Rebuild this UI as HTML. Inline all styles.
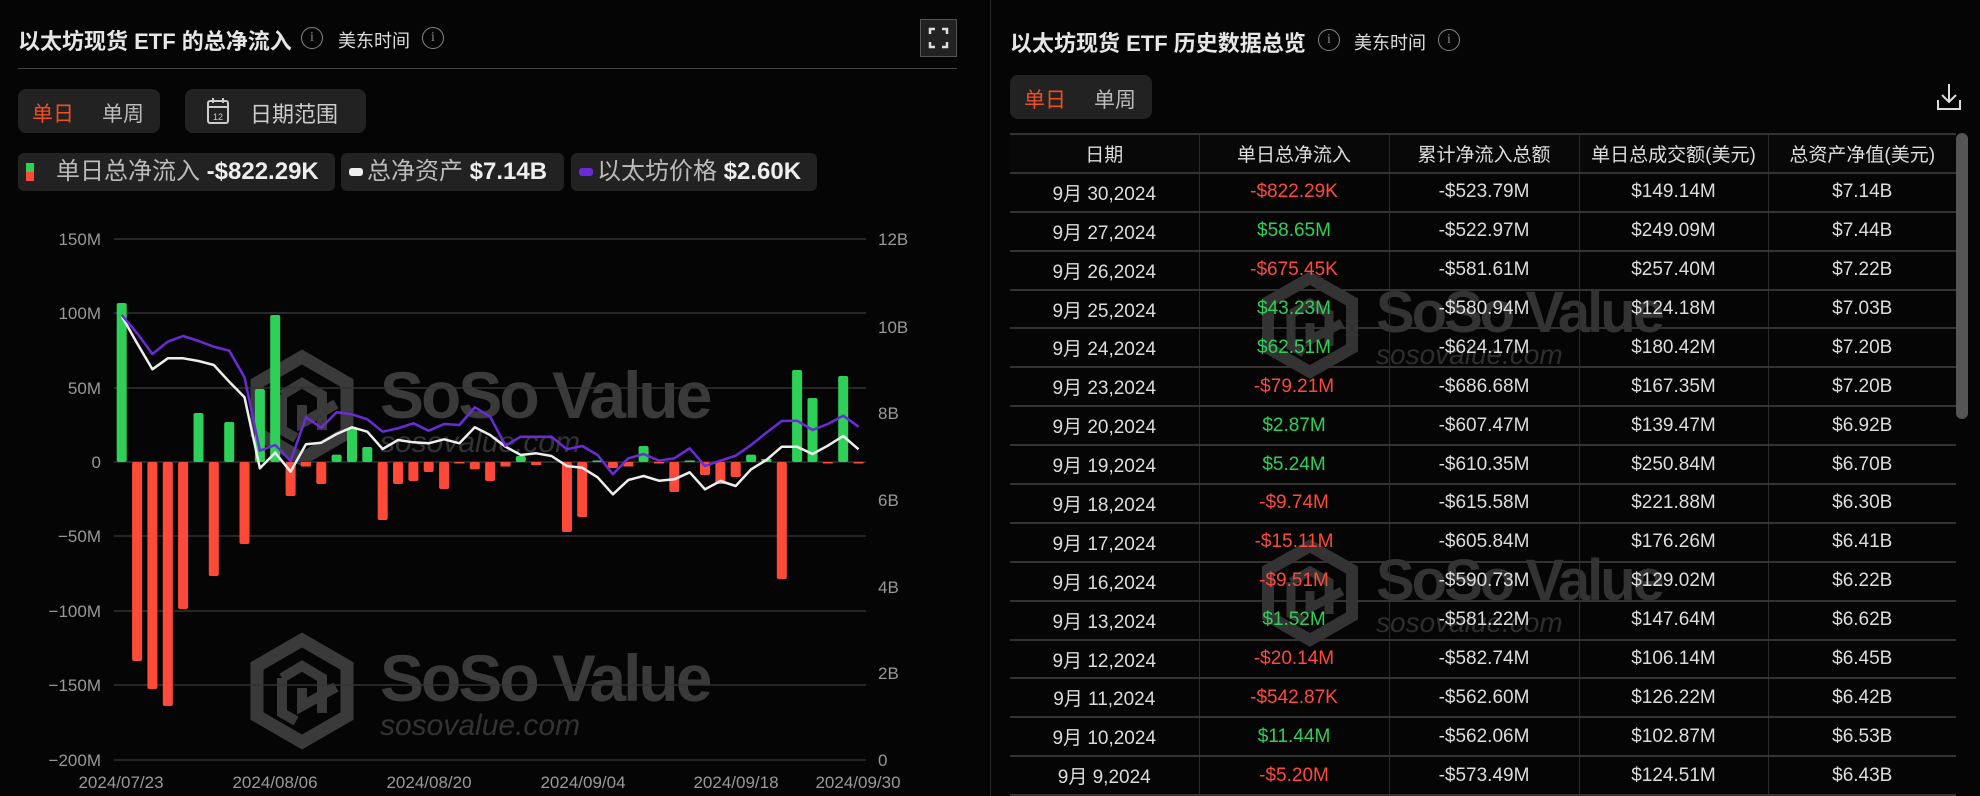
<!DOCTYPE html>
<html><head><meta charset="utf-8"><style>
*{margin:0;padding:0;box-sizing:border-box}
body{width:1980px;height:796px;background:#050505;overflow:hidden;position:relative;font-family:"Liberation Sans","Noto Sans CJK SC",sans-serif;color:#ddd}
.a{position:absolute;white-space:nowrap}
.t{font-size:22px;font-weight:bold;color:#e6e6e6}
.s{font-size:18px;color:#ddd}
.info{width:22px;height:22px;border:1.5px solid #888;border-radius:50%;font-size:14px;color:#888;text-align:center;line-height:19px;font-family:"Liberation Serif",serif}
.box{background:#222;border-radius:8px}
.chip{background:#222;border-radius:6px;height:38px;font-size:24px;line-height:38px;color:#bbb}
.chip b{color:#eee;font-weight:bold}
table{border-collapse:collapse;position:absolute;left:1010px;top:133px;width:946px;font-size:19px;color:#ddd;table-layout:fixed}
td,th{height:38.9px;text-align:center;border-bottom:2px solid #333;border-left:1px solid #2a2a2a;font-weight:normal;padding:0}
th{border-top:2px solid #333;background:#080808}
td:first-child,th:first-child{border-left:none}
.r{color:#ff4a3a}.g{color:#2ed158}
</style></head><body>
<!-- left header -->
<div class="a t" style="left:18px;top:24px">以太坊现货 ETF 的总净流入</div>
<div class="a info" style="left:301px;top:27px">i</div>
<div class="a s" style="left:338px;top:27px">美东时间</div>
<div class="a info" style="left:422px;top:27px">i</div>
<div class="a" style="left:920px;top:19px;width:37px;height:38px;background:#222;border:1px solid #555"></div>
<svg class="a" style="left:920px;top:19px" width="37" height="38"><path d="M10 15V10H15M22 10H27V15M27 23V28H22M15 28H10V23" stroke="#ddd" stroke-width="2.5" fill="none"/></svg>
<div class="a" style="left:18px;top:68px;width:939px;height:1px;background:#444"></div>
<div class="a box" style="left:18px;top:89px;width:142px;height:44px"></div>
<div class="a" style="left:32px;top:98px;font-size:21px;color:#f04e23">单日</div>
<div class="a" style="left:102px;top:98px;font-size:21px;color:#bbb">单周</div>
<div class="a box" style="left:185px;top:89px;width:181px;height:44px"></div>
<svg class="a" style="left:206px;top:96px" width="24" height="30"><rect x="2" y="5" width="20" height="22" rx="2" stroke="#ccc" stroke-width="2" fill="none"/><path d="M2 11H22M7 2V7M17 2V7" stroke="#ccc" stroke-width="2"/><text x="12" y="24" font-size="9" fill="#ccc" text-anchor="middle" font-family="Liberation Sans">12</text></svg>
<div class="a" style="left:250px;top:97px;font-size:22px;color:#ccc">日期范围</div>
<div class="a chip" style="left:18px;top:153px;width:317px">
 <span style="position:absolute;left:8px;top:10px;width:8px;height:9px;background:#2ed158"></span><span style="position:absolute;left:8px;top:19px;width:8px;height:9px;background:#ff4a3a"></span>
 <span style="position:absolute;left:38px">单日总净流入 <b>-$822.29K</b></span></div>
<div class="a chip" style="left:341px;top:153px;width:223px">
 <span style="position:absolute;left:8px;top:15px;width:14px;height:8px;border-radius:3px;background:#eee"></span>
 <span style="position:absolute;left:26px">总净资产 <b>$7.14B</b></span></div>
<div class="a chip" style="left:571px;top:153px;width:246px">
 <span style="position:absolute;left:8px;top:15px;width:14px;height:8px;border-radius:3px;background:#6b2bd9"></span>
 <span style="position:absolute;left:26px">以太坊价格 <b>$2.60K</b></span></div>

<svg class="a" style="left:0;top:0" width="990" height="796" font-family="Liberation Sans">
<g fill="#3a3a3a">
 <g id="wm1">
 <path d="M302 357L347 383V433L302 459L257 433V383Z" fill="none" stroke="#3a3a3a" stroke-width="13"/>
 <path d="M282 395L302 383L322 395V412L302 423V405M282 395V430L296 438M322 430V412L336 404" fill="none" stroke="#3a3a3a" stroke-width="10"/>
 <text x="380" y="418" font-size="66" font-weight="bold" letter-spacing="-3">SoSo Value</text>
 <text x="380" y="452" font-size="30" font-style="italic" fill="#333">sosovalue.com</text>
 </g>
 <use href="#wm1" transform="translate(0,283)"/>
</g>
<g stroke="#333" stroke-width="1.5">
 <line x1="114" x2="866" y1="239" y2="239"/><line x1="114" x2="866" y1="313" y2="313"/><line x1="114" x2="866" y1="388" y2="388"/><line x1="114" x2="866" y1="462" y2="462"/><line x1="114" x2="866" y1="536" y2="536"/><line x1="114" x2="866" y1="611" y2="611"/><line x1="114" x2="866" y1="685" y2="685"/><line x1="114" x2="866" y1="760" y2="760"/>
</g>
<g fill="#999" font-size="17" text-anchor="end">
 <text x="101" y="245">150M</text><text x="101" y="319">100M</text><text x="101" y="394">50M</text><text x="101" y="468">0</text><text x="101" y="542">−50M</text><text x="101" y="617">−100M</text><text x="101" y="691">−150M</text><text x="101" y="766">−200M</text>
</g>
<g fill="#999" font-size="17">
 <text x="878" y="245">12B</text><text x="878" y="333">10B</text><text x="878" y="419">8B</text><text x="878" y="506">6B</text><text x="878" y="593">4B</text><text x="878" y="679">2B</text><text x="878" y="766">0</text>
</g>
<g fill="#999" font-size="17" text-anchor="middle">
 <text x="121" y="788">2024/07/23</text><text x="275" y="788">2024/08/06</text><text x="429" y="788">2024/08/20</text><text x="583" y="788">2024/09/04</text><text x="736" y="788">2024/09/18</text><text x="858" y="788">2024/09/30</text>
</g>
<g fill="#2ed158">
 <rect x="116.7" y="303" width="10" height="159" rx="2"/>
 <rect x="193.5" y="413" width="10" height="49" rx="2"/>
 <rect x="224.2" y="422" width="10" height="40" rx="2"/>
 <rect x="254.9" y="389" width="10" height="73" rx="2"/>
 <rect x="270.2" y="315" width="10" height="147" rx="2"/>
 <rect x="331.6" y="454.6" width="10" height="7.4" rx="2"/>
 <rect x="347" y="428" width="10" height="34" rx="2"/>
 <rect x="362.3" y="447" width="10" height="15" rx="2"/>
 <rect x="515.8" y="456" width="10" height="6" rx="2"/>
 <rect x="592.6" y="460.5" width="10" height="1.5"/>
 <rect x="638.6" y="446" width="10" height="16" rx="2"/>
 <rect x="684.7" y="460.5" width="10" height="1.5"/>
 <rect x="746.1" y="454.6" width="10" height="7.4" rx="2"/>
 <rect x="761.4" y="459" width="10" height="3"/>
 <rect x="792.1" y="370" width="10" height="92" rx="2"/>
 <rect x="807.5" y="398" width="10" height="64" rx="2"/>
 <rect x="838.2" y="376" width="10" height="86" rx="2"/>
</g>
<g fill="#ff4a3a">
 <rect x="132.1" y="462" width="10" height="199" rx="2"/>
 <rect x="147.4" y="462" width="10" height="227" rx="2"/>
 <rect x="162.8" y="462" width="10" height="244" rx="2"/>
 <rect x="178.1" y="462" width="10" height="147" rx="2"/>
 <rect x="208.8" y="462" width="10" height="114" rx="2"/>
 <rect x="239.5" y="462" width="10" height="82" rx="2"/>
 <rect x="285.6" y="462" width="10" height="34" rx="2"/>
 <rect x="300.9" y="462" width="10" height="4.5"/>
 <rect x="316.3" y="462" width="10" height="22" rx="2"/>
 <rect x="377.7" y="462" width="10" height="58" rx="2"/>
 <rect x="393" y="462" width="10" height="22" rx="2"/>
 <rect x="408.4" y="462" width="10" height="19" rx="2"/>
 <rect x="423.7" y="462" width="10" height="10" rx="2"/>
 <rect x="439.1" y="462" width="10" height="27" rx="2"/>
 <rect x="454.4" y="462" width="10" height="1.5"/>
 <rect x="469.8" y="462" width="10" height="7.4" rx="2"/>
 <rect x="485.1" y="462" width="10" height="19" rx="2"/>
 <rect x="500.5" y="462" width="10" height="4.5"/>
 <rect x="531.2" y="462" width="10" height="3"/>
 <rect x="561.9" y="462" width="10" height="70" rx="2"/>
 <rect x="577.2" y="462" width="10" height="55" rx="2"/>
 <rect x="607.9" y="462" width="10" height="6" rx="2"/>
 <rect x="623.3" y="462" width="10" height="4.5"/>
 <rect x="654" y="462" width="10" height="1.5"/>
 <rect x="669.3" y="462" width="10" height="30" rx="2"/>
 <rect x="700" y="462" width="10" height="13" rx="2"/>
 <rect x="715.4" y="462" width="10" height="22" rx="2"/>
 <rect x="730.7" y="462" width="10" height="15" rx="2"/>
 <rect x="776.8" y="462" width="10" height="117" rx="2"/>
 <rect x="822.8" y="462" width="10" height="1.5"/>
 <rect x="853.5" y="462" width="10" height="1.5"/>
</g>
<polyline fill="none" stroke="#eee" stroke-width="2.5" stroke-linejoin="round" points="121.7,316 137.1,343.3 152.4,369.3 167.8,358.3 183.1,358.3 198.5,361 213.8,365 229.2,381.7 244.5,397.3 259.9,468.3 275.2,452.7 290.6,471.7 305.9,444.3 321.3,442.7 336.6,434 352,427.3 367.3,431.7 382.7,449 398,440 413.4,442.3 428.7,443.3 444.1,439.3 459.4,443.3 474.8,427.3 490.1,435 505.5,446.7 520.8,455 536.2,453.3 551.5,456 566.9,466 582.2,467.7 597.6,477.3 612.9,494.3 628.3,480 643.6,476 659,480.7 674.3,479.3 689.7,472.3 705,489.3 720.4,481 735.7,486 751.1,469.3 766.4,460 781.8,446.7 797.1,446.7 812.5,454 827.8,445.7 843.2,436 858.5,449.3"/>
<polyline fill="none" stroke="#6b2bd9" stroke-width="2.5" stroke-linejoin="round" points="121.7,315 137.1,333.3 152.4,354 167.8,341.7 183.1,336 198.5,341 213.8,346.7 229.2,350.7 244.5,377.3 259.9,450.7 275.2,445 290.6,461 305.9,417.3 321.3,427.7 336.6,412.3 352,414.3 367.3,419.3 382.7,431.7 398,428.3 413.4,423.3 428.7,430.7 444.1,424 459.4,425 474.8,407.3 490.1,416.7 505.5,445.7 520.8,436.7 536.2,436.7 551.5,436.7 566.9,449.3 582.2,446 597.6,455 612.9,474.3 628.3,458.3 643.6,454 659,460.7 674.3,458.3 689.7,448.3 705,466 720.4,460.7 735.7,455.7 751.1,445 766.4,432.7 781.8,421 797.1,420.7 812.5,430 827.8,424 843.2,415.7 858.5,426.7"/>
</svg>

<!-- right panel -->
<div class="a" style="left:990px;top:0;width:1px;height:796px;background:#2a2a2a"></div>
<div class="a t" style="left:1010px;top:26px">以太坊现货 ETF 历史数据总览</div>
<div class="a info" style="left:1318px;top:29px">i</div>
<div class="a s" style="left:1354px;top:29px">美东时间</div>
<div class="a info" style="left:1438px;top:29px">i</div>
<div class="a box" style="left:1010px;top:75px;width:142px;height:44px"></div>
<div class="a" style="left:1024px;top:84px;font-size:21px;color:#f04e23">单日</div>
<div class="a" style="left:1094px;top:84px;font-size:21px;color:#bbb">单周</div>
<svg class="a" style="left:1935px;top:82px" width="28" height="30"><path d="M14 2V20M7 13L14 20L21 13M3 18V27H25V18" stroke="#ddd" stroke-width="2" fill="none"/></svg>

<svg class="a" style="left:1000px;top:0" width="980" height="796" font-family="Liberation Sans">
 <g id="wm2" fill="#333">
 <path d="M310 278L352 302V348L310 372L268 348V302Z" fill="none" stroke="#333" stroke-width="12"/>
 <path d="M291 314L310 303L329 314V330L310 340V323M291 314V346L304 353M329 346V330L342 323" fill="none" stroke="#333" stroke-width="9"/>
 <text x="376" y="332" font-size="58" font-weight="bold" letter-spacing="-3">SoSo Value</text>
 <text x="376" y="364" font-size="28" font-style="italic" fill="#2e2e2e">sosovalue.com</text>
 </g>
 <use href="#wm2" transform="translate(0,268)"/>
</svg>
<table>
<colgroup><col style="width:189px"><col style="width:190px"><col style="width:190px"><col style="width:189px"><col style="width:188px"></colgroup>
<tr><th>日期</th><th>单日总净流入</th><th>累计净流入总额</th><th>单日总成交额(美元)</th><th>总资产净值(美元)</th></tr>
<tr><td>9月 30,2024</td><td class="r">-$822.29K</td><td>-$523.79M</td><td>$149.14M</td><td>$7.14B</td></tr>
<tr><td>9月 27,2024</td><td class="g">$58.65M</td><td>-$522.97M</td><td>$249.09M</td><td>$7.44B</td></tr>
<tr><td>9月 26,2024</td><td class="r">-$675.45K</td><td>-$581.61M</td><td>$257.40M</td><td>$7.22B</td></tr>
<tr><td>9月 25,2024</td><td class="g">$43.23M</td><td>-$580.94M</td><td>$124.18M</td><td>$7.03B</td></tr>
<tr><td>9月 24,2024</td><td class="g">$62.51M</td><td>-$624.17M</td><td>$180.42M</td><td>$7.20B</td></tr>
<tr><td>9月 23,2024</td><td class="r">-$79.21M</td><td>-$686.68M</td><td>$167.35M</td><td>$7.20B</td></tr>
<tr><td>9月 20,2024</td><td class="g">$2.87M</td><td>-$607.47M</td><td>$139.47M</td><td>$6.92B</td></tr>
<tr><td>9月 19,2024</td><td class="g">$5.24M</td><td>-$610.35M</td><td>$250.84M</td><td>$6.70B</td></tr>
<tr><td>9月 18,2024</td><td class="r">-$9.74M</td><td>-$615.58M</td><td>$221.88M</td><td>$6.30B</td></tr>
<tr><td>9月 17,2024</td><td class="r">-$15.11M</td><td>-$605.84M</td><td>$176.26M</td><td>$6.41B</td></tr>
<tr><td>9月 16,2024</td><td class="r">-$9.51M</td><td>-$590.73M</td><td>$129.02M</td><td>$6.22B</td></tr>
<tr><td>9月 13,2024</td><td class="g">$1.52M</td><td>-$581.22M</td><td>$147.64M</td><td>$6.62B</td></tr>
<tr><td>9月 12,2024</td><td class="r">-$20.14M</td><td>-$582.74M</td><td>$106.14M</td><td>$6.45B</td></tr>
<tr><td>9月 11,2024</td><td class="r">-$542.87K</td><td>-$562.60M</td><td>$126.22M</td><td>$6.42B</td></tr>
<tr><td>9月 10,2024</td><td class="g">$11.44M</td><td>-$562.06M</td><td>$102.87M</td><td>$6.53B</td></tr>
<tr><td>9月 9,2024</td><td class="r">-$5.20M</td><td>-$573.49M</td><td>$124.51M</td><td>$6.43B</td></tr>
</table>
<div class="a" style="left:1956px;top:133px;width:12px;height:286px;background:#555;border-radius:6px"></div>
</body></html>
